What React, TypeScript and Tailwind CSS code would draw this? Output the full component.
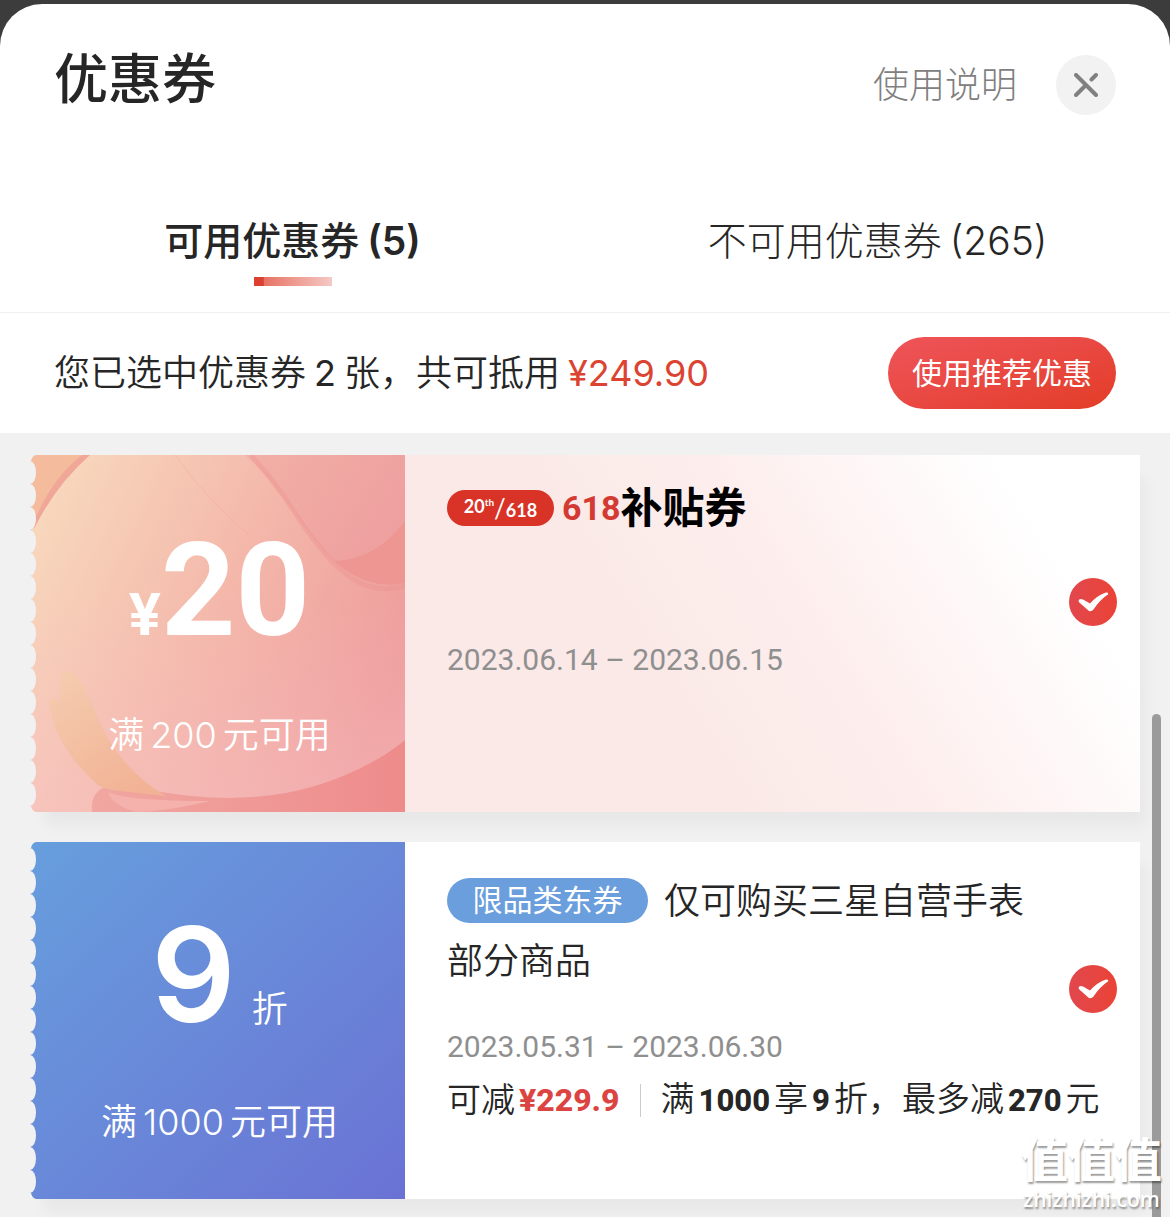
import { FunctionComponent, ReactNode, useState } from "react";

const NOTCHES = Array.from({ length: 15 }, (_, i) => 17.5 + i * 23);

const TicketEdge: FunctionComponent = () => (
  <svg
    className="absolute left-0 top-0 h-full w-[6px]"
    viewBox="0 0 6 357"
    preserveAspectRatio="none"
    aria-hidden="true"
  >
    <path d="M0 0H6Q2 1 1 6H0ZM0 357H6Q2 356 1 351H0Z" fill="#f1f1f1" />
    {NOTCHES.map((y) => (
      <ellipse key={y} cx="0" cy={y} rx="6" ry="11.5" fill="#f1f1f1" />
    ))}
  </svg>
);

const PetalArt: FunctionComponent = () => (
  <svg
    className="absolute inset-0 h-full w-full"
    viewBox="0 0 375 357"
    preserveAspectRatio="none"
    aria-hidden="true"
  >
    <defs>
      <linearGradient id="petal-base" x1="0" y1="0.15" x2="1" y2="0.6">
        <stop offset="0" stopColor="#f8d9be" />
        <stop offset="0.5" stopColor="#f4b9ab" />
        <stop offset="1" stopColor="#ee9b9b" />
      </linearGradient>
      <linearGradient id="petal-glow" x1="0" y1="0" x2="0" y2="1">
        <stop offset="0.4" stopColor="#f8c4c8" stopOpacity="0" />
        <stop offset="1" stopColor="#f8c4c8" stopOpacity="0.45" />
      </linearGradient>
      <linearGradient id="petal-leaf" x1="0" y1="0" x2="0.7" y2="1">
        <stop offset="0" stopColor="#f5cdb0" />
        <stop offset="1" stopColor="#f2b295" />
      </linearGradient>
      <linearGradient id="petal-top" x1="0" y1="0" x2="1" y2="0.5">
        <stop offset="0" stopColor="#f2b0a6" />
        <stop offset="1" stopColor="#ee9f9f" />
      </linearGradient>
      <linearGradient id="petal-low" x1="0" y1="0" x2="1" y2="0">
        <stop offset="0" stopColor="#f1a7a1" />
        <stop offset="1" stopColor="#ee8b8b" />
      </linearGradient>
    </defs>
    <rect width="375" height="357" fill="url(#petal-base)" />
    <rect width="375" height="357" fill="url(#petal-glow)" />
    <path d="M0 0H60Q26 30 5 72L0 76Z" fill="#f1a797" />
    <path d="M0 0H52Q24 22 8 58L0 68Z" fill="#f4bb9d" />
    <path d="M215 0Q238 20 262 55T308 110Q340 134 375 128V0Z" fill="url(#petal-top)" />
    <path d="M375 66Q347 104 305 106Q336 136 375 128Z" fill="#ee9792" />
    <path
      d="M221 0Q246 28 265 58T304 108Q336 142 375 131"
      fill="none"
      stroke="#eb8f8c"
      strokeOpacity="0.35"
      strokeWidth="5"
    />
    <path
      d="M145 0Q180 48 219 80"
      fill="none"
      stroke="#f0a493"
      strokeOpacity="0.35"
      strokeWidth="1"
    />
    <path d="M125 336Q215 352 285 331Q340 314 375 285V357H62Q60 336 78 331Z" fill="url(#petal-low)" />
    <path
      d="M19 247Q22 240 30 248L31 222Q34 210 44 220Q56 232 64 254Q86 312 136 341L90 336Q74 334 68 330Q25 293 19 247Z"
      fill="url(#petal-leaf)"
    />
    <path d="M78 337Q96 346 180 346Q140 356 106 357Q82 350 78 337Z" fill="#f5b2ad" />
  </svg>
);

const TickBox: FunctionComponent<{ label: string }> = ({ label }) => {
  const [on, setOn] = useState(true);
  return (
    <label className="relative block size-12 shrink-0">
      <input
        type="checkbox"
        aria-label={label}
        checked={on}
        onChange={() => setOn(!on)}
        className="block size-12 appearance-none rounded-full border-2 border-[#cccccc] bg-white checked:border-0 checked:bg-linear-to-r checked:from-[#e2474d] checked:to-[#ea4335]"
      />
      <svg
        className="pointer-events-none absolute inset-0"
        viewBox="0 0 48 48"
        fill="#fff"
        aria-hidden="true"
      >
        <path d="M10 21.800Q11.500 20.500 14 21.600L21 25.500Q28 17.500 37 14.500Q39.700 14 39.200 16.200Q30.500 22 24.500 31.500Q21.500 35 18.500 31.800L10.300 24.400Q9 23 10 21.800Z" />
      </svg>
    </label>
  );
};

type CouponProps = {
  amount: ReactNode;
  limit: ReactNode;
  title: ReactNode;
  date: string;
  detail?: ReactNode;
  label: string;
  art?: ReactNode;
  faceClass: string;
  bodyClass: string;
};

const Coupon: FunctionComponent<CouponProps> = ({
  amount,
  limit,
  title,
  date,
  detail,
  label,
  art,
  faceClass,
  bodyClass,
}) => (
  <li className="flex min-h-[357px] shadow-[10px_18px_14px_-4px_rgba(0,0,0,0.04)]">
    <div className={`relative w-[375px] shrink-0 text-white ${faceClass}`}>
      {art}
      <TicketEdge />
      <div className="relative flex flex-col items-center pt-[70px] pl-1">
        <div className="flex h-[132px] items-baseline leading-[132px]">{amount}</div>
        <p className="mt-[54px] text-[36px] leading-[48px] font-[350]">{limit}</p>
      </div>
    </div>
    <div className={`min-w-0 flex-1 pt-[29px] pr-[23px] pl-[42px] ${bodyClass}`}>
      <div className="flex h-[142px] justify-between">
        {title}
        <div className="self-end">
          <TickBox label={label} />
        </div>
      </div>
      <p className="mt-[10px] font-[Roboto,sans-serif] text-[30px] leading-[48px] text-[#8f8f8f]">
        {date}
      </p>
      {detail}
    </div>
  </li>
);

const Num: FunctionComponent<{ children: ReactNode }> = ({ children }) => (
  <b className="mx-1 font-[Roboto,sans-serif] text-[31px] font-extrabold">{children}</b>
);

const App: FunctionComponent = () => {
  const [tab, setTab] = useState(0);
  return (
    <div className="h-screen overflow-hidden bg-[#3c3c3c] pt-1 font-[Inter,'Noto_Sans_CJK_SC',sans-serif] text-[#262626]">
      <main className="relative min-h-full rounded-t-[42px] bg-white">
        <header className="flex h-[164px] items-start justify-between px-[54px]">
          <h1 className="mt-[40px] text-[54px] leading-[72px] font-medium">优惠券</h1>
          <div className="mt-[51px] flex items-center gap-[39px]">
            <button type="button" className="text-[36px] leading-[60px] font-light text-[#808080]">
              使用说明
            </button>
            <button
              type="button"
              aria-label="关闭"
              className="flex size-[60px] items-center justify-center rounded-full bg-[#f2f2f2]"
            >
              <svg
                className="size-6"
                viewBox="0 0 24 24"
                fill="none"
                stroke="#808080"
                strokeWidth="4"
                strokeLinecap="round"
              >
                <path d="M2 2L22 22M22 2L17.500 6.500M12 12L2 22" />
              </svg>
            </button>
          </div>
        </header>

        <div role="tablist" className="grid h-[145px] grid-cols-2 border-b border-[#f0f0f0]">
          {["可用优惠券", "不可用优惠券"].map((name, i) => (
            <button
              key={name}
              type="button"
              role="tab"
              aria-selected={tab === i}
              onClick={() => setTab(i)}
              className={`flex flex-col items-center pt-[46px] text-[39px] leading-[54px] ${
                tab === i ? "font-medium" : "font-light"
              }`}
            >
              <span>
                {name}
                <span className={tab === i ? "ml-2 font-semibold" : "ml-2"}>
                  {i === 0 ? "(5)" : "(265)"}
                </span>
              </span>
              {tab === i && (
                <span className="mt-[9px] h-[9px] w-[78px] bg-linear-to-r from-[#dc4030] from-12% via-[#e67264] via-13% to-[#f4c9c6]" />
              )}
            </button>
          ))}
        </div>

        <section className="flex h-[120px] items-center justify-between px-[54px]">
          <p className="text-[36px] font-[350] whitespace-nowrap">
            您已选中优惠券<span className="mx-2 font-normal">2</span>张，共可抵用
            <span className="ml-2 font-normal text-[#dc4432]">¥249.90</span>
          </p>
          <button
            type="button"
            className="h-[72px] w-[228px] rounded-full bg-linear-to-br from-[#ef5459] to-[#e33c25] text-[30px] text-white"
          >
            使用推荐优惠
          </button>
        </section>

        <ul className="flex flex-col gap-[30px] bg-[#f1f1f1] px-[30px] pt-[22px] pb-[30px]">
          <Coupon
            label="选择 618 补贴券"
            faceClass="bg-[#f4b9ab]"
            bodyClass="bg-linear-[58deg] from-[#fae9e7] from-35% via-[#fdeeed] via-55% to-white to-85%"
            art={<PetalArt />}
            amount={
              <b className="font-[Roboto,sans-serif] text-[130px]">
                <span className="text-[60px]">¥</span>20
              </b>
            }
            limit={
              <>
                满<span className="mx-[6px]">200</span>元可用
              </>
            }
            title={
              <h2 className="flex h-12 items-center">
                <span className="mr-2 flex h-9 w-[107px] justify-center rounded-full bg-[#d93226] py-1 font-[Lato,sans-serif] text-[18px] leading-6 font-bold text-white">
                  <span className="self-start">20</span>
                  <span className="self-start text-[10px] leading-4">th</span>
                  <span className="text-[26px] leading-7 font-normal">/</span>
                  <span className="self-end">618</span>
                </span>
                <b className="font-[Roboto,sans-serif] text-[34px] leading-[48px] text-[#d23a32]">
                  618
                </b>
                <span className="text-[42px] leading-[48px] font-bold text-black">补贴券</span>
              </h2>
            }
            date="2023.06.14 – 2023.06.15"
          />
          <Coupon
            label="选择限品类东券"
            faceClass="bg-linear-to-br from-[#669edd] to-[#6a72d4]"
            bodyClass="bg-white"
            amount={
              <>
                <span className="text-[132px] leading-[124px] font-semibold">9</span>
                <span className="ml-4 text-[36px] leading-[48px] font-[350]">折</span>
              </>
            }
            limit={
              <>
                满<span className="mx-[6px]">1000</span>元可用
              </>
            }
            title={
              <div className="max-w-[590px] flex-1">
                <span className="float-left mt-[7px] mr-4 h-[45px] w-[201px] rounded-full bg-[#6a9edc] text-center text-[30px] leading-[45px] text-white">
                  限品类东券
                </span>
                <h2 className="text-[36px] leading-[60px] font-[350]">
                  仅可购买三星自营手表部分商品
                </h2>
              </div>
            }
            date="2023.05.31 – 2023.06.30"
            detail={
              <p className="flex items-center text-[34px] leading-[56px] font-[350] whitespace-nowrap">
                可减
                <b className="ml-1 font-[Roboto,sans-serif] text-[32px] font-extrabold text-[#dc4441]">
                  ¥229.9
                </b>
                <span className="mx-5 h-[33px] w-px bg-[#cccccc]" />
                <span>
                  满<Num>1000</Num>享<Num>9</Num>折，最多减<Num>270</Num>元
                </span>
              </p>
            }
          />
        </ul>
      </main>

      <div className="absolute top-[714px] right-[9px] bottom-0 w-[9px] rounded-t-full bg-[#9b9b9b]" />
      <div className="pointer-events-none absolute right-2 bottom-[6px] text-center text-white [text-shadow:1px_2px_2px_rgba(0,0,0,0.4)]">
        <p className="text-[47px] leading-[54px] font-bold">值值值</p>
        <p className="font-['Open_Sans',sans-serif] text-[21px] leading-6 font-semibold">zhizhizhi.com</p>
      </div>
    </div>
  );
};

export default App;
